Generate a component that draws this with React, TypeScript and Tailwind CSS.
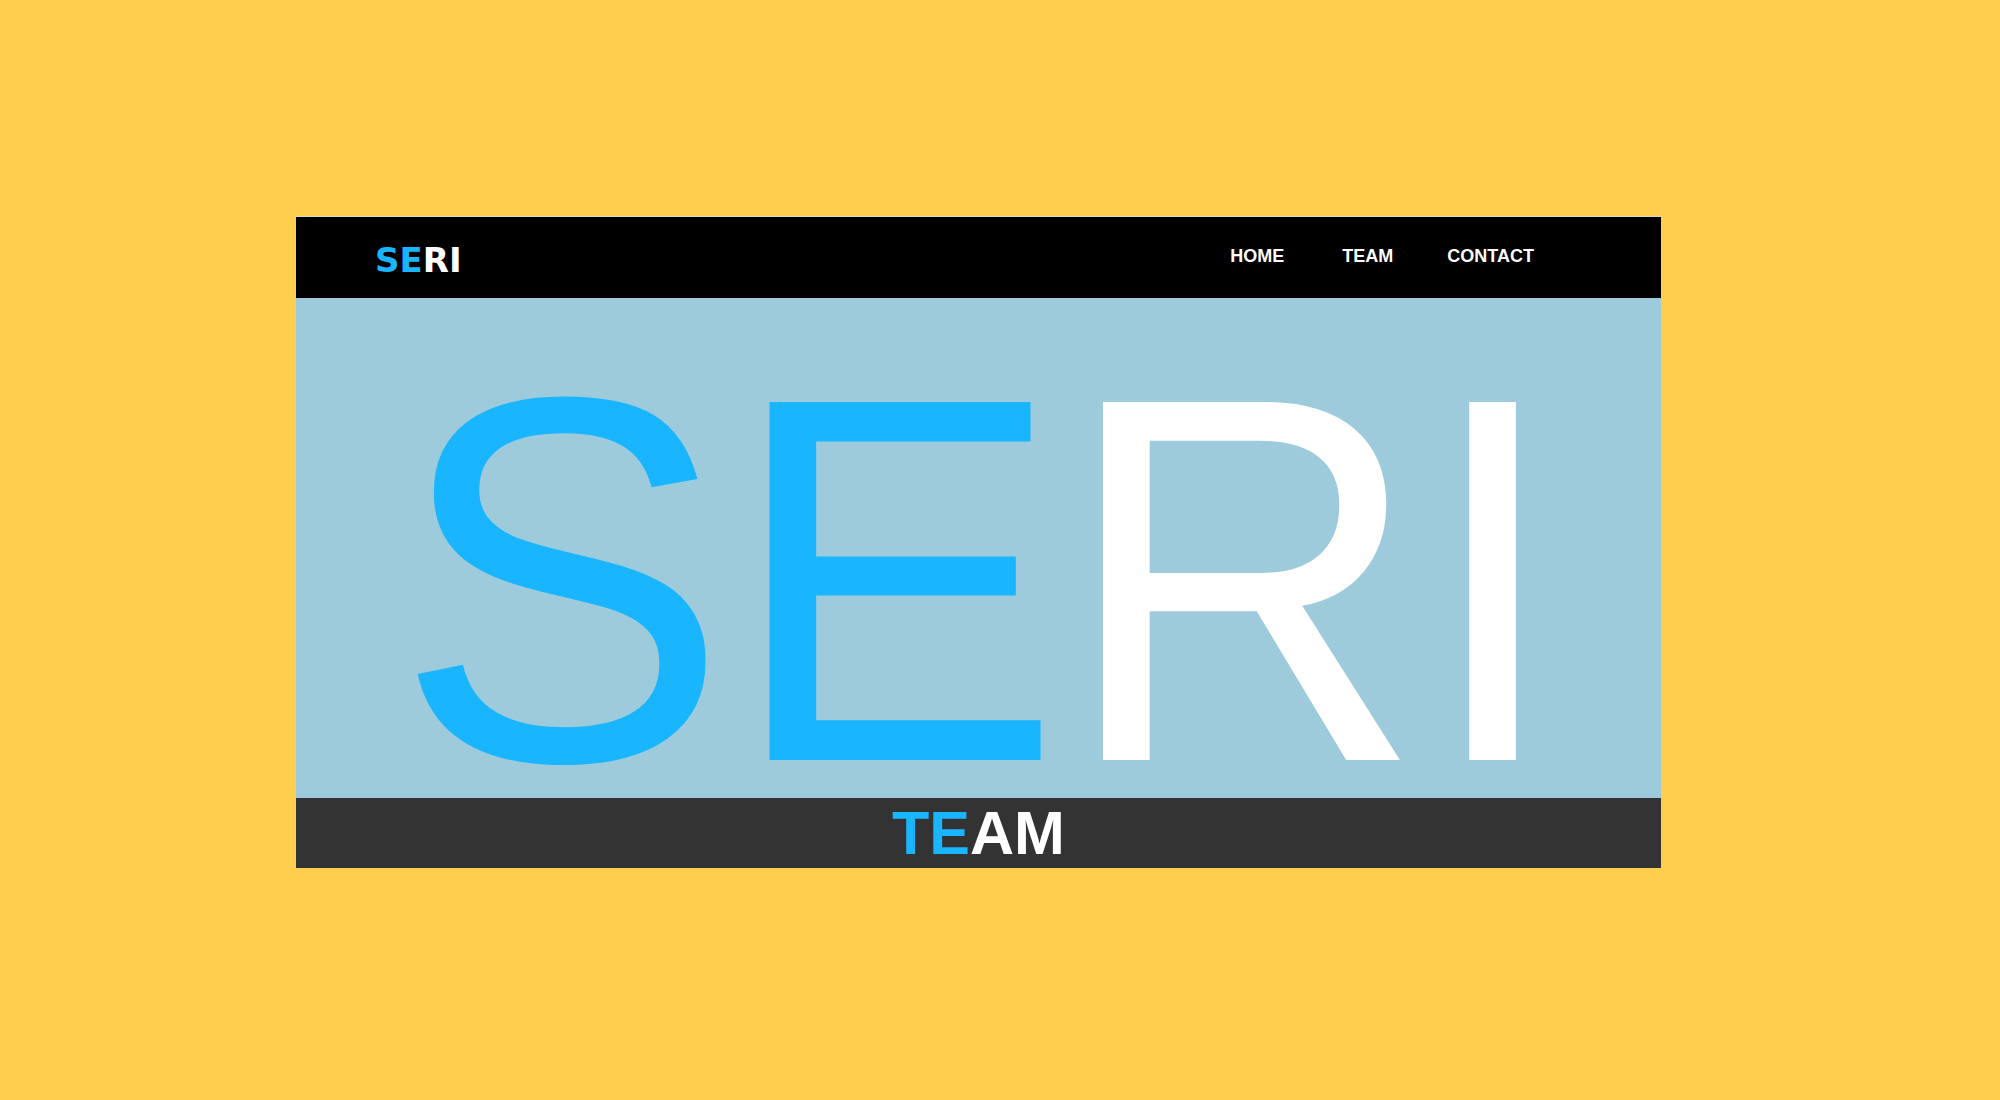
import React from "react";

export default function App() {
  return (
    <div className="min-h-[1100px] w-full bg-[#ffce4e] pt-[216px]">
      <div className="ml-[296px] w-[1365px] border-t border-[#d8d8d0]">
        <nav className="flex h-[81px] items-center justify-between bg-black pl-[79px] pr-[127px]">
          <div
            className="mt-[4px] text-[34px] font-bold leading-[normal]"
            style={{ fontFamily: '"DejaVu Sans", Verdana, sans-serif' }}
          >
            <span className="text-[#1ab5ff]">SE</span>
            <span className="text-white">RI</span>
          </div>
          <ul
            className="mb-[3px] flex items-center text-[18px] font-bold leading-[normal] text-white"
            style={{ fontFamily: '"Liberation Sans", Arial, sans-serif' }}
          >
            <li>HOME</li>
            <li className="ml-[58px]">TEAM</li>
            <li className="ml-[54px]">CONTACT</li>
          </ul>
        </nav>
        <section className="h-[500px] bg-[#9ecbdc] pt-[139px] text-center">
          <h1
            className="origin-[50%_323px] scale-y-[1.041] whitespace-nowrap text-[500px] font-normal leading-[300px]"
            style={{ fontFamily: '"Liberation Sans", Arial, sans-serif' }}
          >
            <span className="text-[#1ab5ff]">SE</span>
            <span className="text-white">RI</span>
          </h1>
        </section>
        <footer className="h-[70px] overflow-hidden bg-[#333333] text-center">
          <h2
            className="text-[61px] font-bold leading-[normal]"
            style={{ fontFamily: '"Liberation Sans", Arial, sans-serif' }}
          >
            <span className="text-[#1ab5ff]">TE</span>
            <span className="text-white">AM</span>
          </h2>
        </footer>
      </div>
    </div>
  );
}
